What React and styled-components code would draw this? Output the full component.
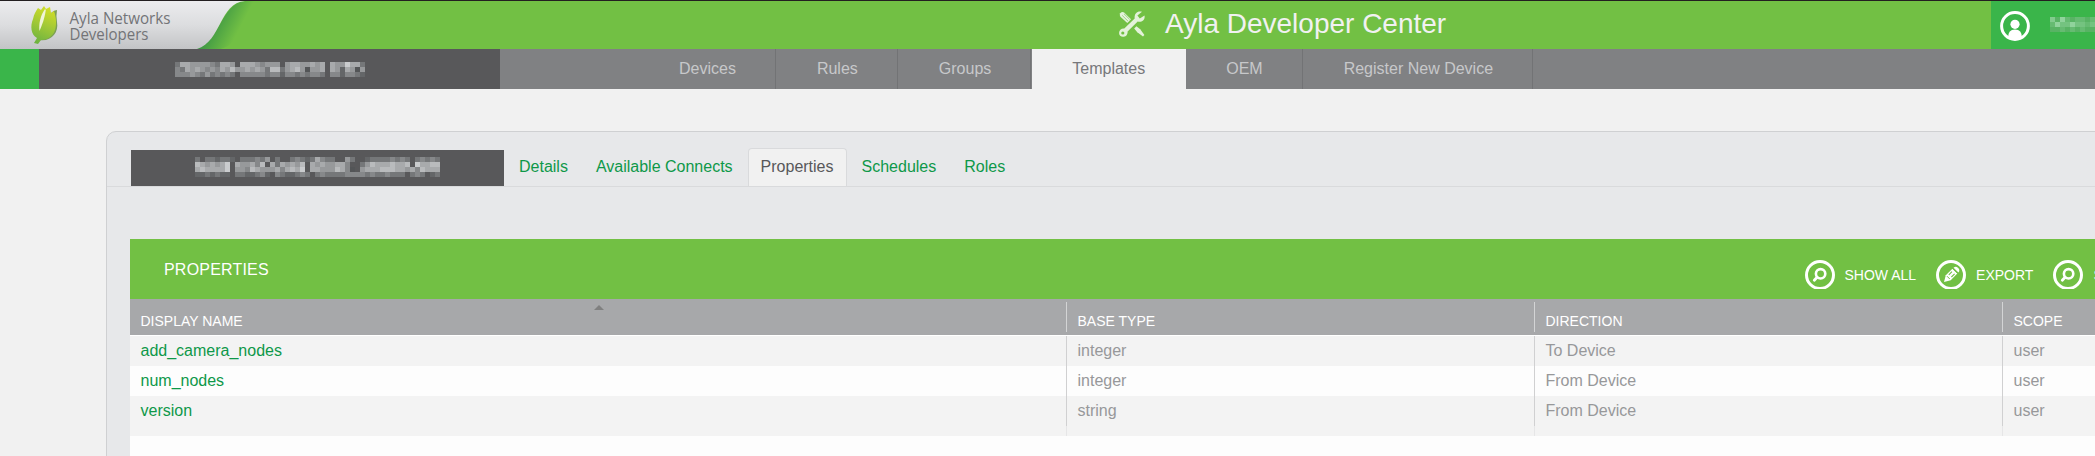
import React from 'react';
import styled, { createGlobalStyle, css } from 'styled-components';

const GlobalStyle = createGlobalStyle`
  * { box-sizing: border-box; }
  body {
    margin: 0;
    overflow: hidden;
    background: #f1f1f1;
    font-family: "Liberation Sans", Arial, sans-serif;
    font-size: 16px;
  }
`;

const Page = styled.div`
  height: 456px;
  overflow: hidden;
  display: flex;
  flex-direction: column;
`;

const TopBar = styled.header`
  flex: none;
  display: flex;
  justify-content: space-between;
  height: 49px;
  border-top: 1px solid #231f20;
  background: #72c044;
`;

const Brand = styled.svg`
  display: block;
  flex: none;
  width: 270px;
  height: 48px;
`;

const TitleGroup = styled.div`
  display: flex;
  align-items: center;
  gap: 20px;
  height: 45px;
  margin-left: 849px;
`;

const Title = styled.h1`
  margin: 0;
  font-size: 28px;
  font-weight: 400;
  line-height: 44px;
  color: #f1f1f1;
  white-space: nowrap;
`;

const Account = styled.div`
  display: flex;
  align-items: flex-start;
  gap: 20px;
  width: 104px;
  padding: 10px 0 0 9px;
  margin-left: auto;
  background: #3ab54a;
  svg { display: block; flex: none; }
`;

const AccountName = styled.div`
  padding-top: 6px;
`;

const NavBar = styled.nav`
  flex: none;
  display: flex;
  height: 40px;
  background: #808183;
`;

const NavMarker = styled.div`
  width: 39px;
  background: #3ab54a;
`;

const Clock = styled.div`
  width: 461px;
  padding: 13px 0 0 136px;
  margin-right: 138px;
  background: #58585a;
`;

const NavItem = styled.a`
  padding: 0 39px 0 41px;
  border-right: 1px solid #727375;
  line-height: 40px;
  color: #c7c8ca;
  white-space: nowrap;
  ${({ $active }) => $active && css`
    margin: 0 -1px 0 1px;
    padding: 0 40px;
    border-color: #f1f1f1;
    background: #f1f1f1;
    color: #77787b;
  `}
`;

const Panel = styled.main`
  flex: none;
  width: 2100px;
  height: 400px;
  margin: 42px 0 0 106px;
  border: 1px solid #cfd0d2;
  border-radius: 10px;
  background: #e7e8ea;
`;

const TabBar = styled.div`
  display: flex;
  align-items: flex-end;
  height: 55px;
  padding-left: 24px;
  border-bottom: 1px solid #d9dadc;
`;

const TemplateName = styled.div`
  width: 373px;
  height: 36px;
  padding: 7px 0 0 64px;
  margin-right: 2px;
  background: #58585a;
`;

const Tab = styled.a`
  height: 38px;
  margin-right: 2px;
  padding: 0 12px;
  border: 1px solid transparent;
  border-bottom: 0;
  border-radius: 4px 4px 0 0;
  line-height: 36px;
  color: #0e9849;
  white-space: nowrap;
  ${({ $active }) => $active && css`
    border-color: #d9dadc;
    background: #f1f1f1;
    color: #58585a;
  `}
`;

const TableCard = styled.section`
  margin: 52px 0 0 23px;
  height: 300px;
  background: #fdfdfd;
`;

const TableBar = styled.div`
  display: flex;
  height: 60px;
  padding-left: 34px;
  background: #72c044;
  color: #fff;
`;

const TableTitle = styled.h2`
  width: 1640.5px;
  margin: 0;
  font-size: 16px;
  font-weight: 400;
  letter-spacing: 0.2px;
  line-height: 62px;
`;

const Action = styled.a`
  display: flex;
  gap: 10px;
  flex: none;
  margin: 21px 20px 0 0;
  font-size: 14px;
  line-height: 30px;
  white-space: nowrap;
  svg { display: block; flex: none; }
`;

const columns = '936px 468px 468px 468px';

const HeadRow = styled.div`
  display: grid;
  grid-template-columns: ${columns};
  height: 37px;
  padding: 3px 0;
  border-bottom: 1px solid #fff;
  background: #a7a8aa;
`;

const HeadCell = styled.div`
  position: relative;
  padding: 4px 0 0 10.5px;
  font-size: 14px;
  line-height: 30px;
  height: 30px;
  color: #fff;
  & + & { border-left: 1px solid #d3d4d5; }
`;

const SortArrow = styled.span`
  position: absolute;
  left: 464px;
  top: 3px;
  border: 5px solid transparent;
  border-top: 0;
  border-bottom-color: #808080;
`;

const Row = styled.div`
  display: grid;
  grid-template-columns: ${columns};
  height: 30px;
  background: ${({ $shaded }) => ($shaded ? '#f3f3f3' : '#fdfdfd')};
`;

const Cell = styled.div`
  padding-left: 10.5px;
  line-height: 30px;
  color: ${({ $link }) => ($link ? '#0e9849' : '#97989a')};
  & + & { border-left: 1px solid #d0d0d1; }
`;

const FootRow = styled(Row)`
  height: 10px;
  background: #f3f3f3;
`;

const FootCell = styled.div`
  & + & { border-left: 1px solid #e6e6e7; }
`;

const MosaicSvg = styled.svg`
  display: block;
`;

/* Masked text: each hex digit is the brightness of one 5px block, "." is empty. */
function Mosaic({ rows, color = (n) => `rgb(${n * 17 - 2},${n * 17},${n * 17 + 2})` }) {
  const width = rows[0].length * 5;
  const height = rows.length * 5;
  return (
    <MosaicSvg width={width} height={height} shapeRendering="crispEdges">
      {rows.flatMap((row, y) =>
        [...row].map((c, x) =>
          c === '.' ? null : (
            <rect key={`${x}-${y}`} x={x * 5} y={y * 5} width="5" height="5" fill={color(parseInt(c, 16))} />
          )
        )
      )}
    </MosaicSvg>
  );
}

const clockBlocks = [
  '7aa999987aa9.aaa98999.9aa99a9a.a99caa7',
  '87a9a9898a9b99a9a97bb79ab9599a.a96a959',
  '888987978787.88888788688787887.8868876',
];

const nameBlocks = [
  '7.776776.777879.7..78767a877..97..677778787.78787',
  'ba9a9ac.a99a8b.a7a9a9b.a9a99aa8..79baaabaab.caabb',
  'abaaaac.998ba999a8abac.aa999ba85.9aaabbbaa9a8baaa',
  '6676766.7766786.8766787.787777888878778777.787.67',
];

const userBlocks = ['a7b878878', '8b99b9989', '778787877'];
const userColor = (n) => `rgb(${n * 14 - 10},${n * 8 + 123},${n * 14 + 2})`;

function BrandLogo() {
  return (
    <Brand viewBox="0 1 270 48">
      <defs>
        <linearGradient id="silver" x1="0" y1="0" x2="0" y2="1">
          <stop offset="0" stopColor="#ececee" />
          <stop offset=".5" stopColor="#dcdddf" />
          <stop offset="1" stopColor="#c3c4c6" />
        </linearGradient>
        <linearGradient id="shade" gradientUnits="userSpaceOnUse" x1="216" y1="18" x2="239" y2="30">
          <stop offset="0" stopColor="#3f9844" />
          <stop offset="1" stopColor="#72c044" />
        </linearGradient>
        <linearGradient id="leaf" x1=".7" y1="0" x2=".4" y2="1">
          <stop offset="0" stopColor="#d4df26" />
          <stop offset=".5" stopColor="#a3c936" />
          <stop offset="1" stopColor="#6fb43f" />
        </linearGradient>
      </defs>
      <path d="M190 49 C222 44 220 3 245 1 L270 1 C244 6 246 42 221 49Z" fill="url(#shade)" />
      <path d="M0 1H245C219 3 222 41 197 49H0Z" fill="url(#silver)" />
      <path d="M51 13Q54 10 57 10Q56 15 57 22C59 33 51 42 39 40Z" fill="#7c9f55" />
      <path d="M38 8L41 10L44 6L46 9L50 7L51 13L54 11C56 17 57 24 55 30C53 37 46 40 41 40L38 44L34 43L37 38C31 35 30 26 33 19C34 14 36 11 38 8Z" fill="url(#leaf)" />
      <path d="M45 9C40.5 15 38.5 24 39.5 31C42 25 44.5 19 45.8 10Z" fill="#f0f4d8" />
      <g fontFamily="'Open Sans', 'Noto Sans', sans-serif" fontSize="16" fill="#737477">
        <text x="69.5" y="23.5" textLength="101" lengthAdjust="spacingAndGlyphs">Ayla Networks</text>
        <text x="69.5" y="39.5" textLength="79" lengthAdjust="spacingAndGlyphs">Developers</text>
      </g>
    </Brand>
  );
}

function ToolsIcon() {
  return (
    <svg width="26" height="26" viewBox="0 0 26 26">
      <g fill="#e4f2da">
        <path d="M1.2 2.2Q3.4 0 5.4 1.8L12 8.3L8.3 12L1.4 5.8Q.2 4 1.2 2.2Z" />
        <path d="M15.2 17.4L17.4 15.2L21.2 18.3L25.4 24L24 25.4L18.3 21.2Z" />
        <path d="M23 .8L18.4 4.4L20.8 7.4L25.5 4.4C26.4 9.2 22.6 11.7 18.7 10.6L8.6 20.5C8.9 25.2 4 27.3 1.1 24.8C-1.4 21.5.9 17.2 5.3 17.5L15.7 7.5C15 3.1 18.2-.8 23 .8Z" />
      </g>
      <circle cx="3.8" cy="22" r="1.6" fill="#72c044" />
      <path d="M3.2 4.4L9 10.1M5 2.8L10.7 8.4" stroke="#72c044" strokeWidth=".6" />
    </svg>
  );
}

function UserIcon() {
  return (
    <svg width="30" height="30" viewBox="0 0 30 30">
      <circle cx="15" cy="15" r="13.4" fill="none" stroke="#fff" strokeWidth="3" />
      <circle cx="15" cy="13.3" r="4.6" fill="#fff" />
      <path d="M8 27Q8 18.6 15 18.6T22 27Q15 30 8 27Z" fill="#fff" />
    </svg>
  );
}

/* The ring is one pixel taller than its box, so its lower edge is flat. */
function RingIcon({ kind }) {
  return (
    <svg width="30" height="29" viewBox="0 0 30 29">
      <circle cx="15" cy="15" r="13.5" fill="none" stroke="#fff" strokeWidth="3" />
      {kind === 'search' ? (
        <g fill="none" stroke="#fff">
          <circle cx="15.6" cy="13.8" r="4.7" strokeWidth="2.6" />
          <path d="M12.1 17.2L9.3 20.2" strokeWidth="2.8" strokeLinecap="round" />
        </g>
      ) : (
        <g fill="#fff">
          <path d="M8 22L9.8 15.3L16.4 8.7L21.3 13.6L14.7 20.2Z" />
          <path d="M17.5 7.7Q19.8 5.7 22.1 7.9T22.4 12.5Z" />
          <path d="M12.8 14.8L16 11.6M15.4 17L18.6 13.8" stroke="#72c044" strokeWidth="1.1" />
          <path d="M16.6 8.3L21.7 13.4" stroke="#72c044" strokeWidth="1" />
          <path d="M11 16.2L13.8 19" stroke="#72c044" strokeWidth="1" />
        </g>
      )}
    </svg>
  );
}

const navItems = ['Devices', 'Rules', 'Groups', 'Templates', 'OEM', 'Register New Device'];
const tabs = ['Details', 'Available Connects', 'Properties', 'Schedules', 'Roles'];
const headings = ['DISPLAY NAME', 'BASE TYPE', 'DIRECTION', 'SCOPE'];
const properties = [
  ['add_camera_nodes', 'integer', 'To Device', 'user'],
  ['num_nodes', 'integer', 'From Device', 'user'],
  ['version', 'string', 'From Device', 'user'],
];

export default function App() {
  return (
    <Page>
      <GlobalStyle />
      <TopBar>
        <BrandLogo />
        <TitleGroup>
          <ToolsIcon />
          <Title>Ayla Developer Center</Title>
        </TitleGroup>
        <Account>
          <UserIcon />
          <AccountName>
            <Mosaic rows={userBlocks} color={userColor} />
          </AccountName>
        </Account>
      </TopBar>
      <NavBar>
        <NavMarker />
        <Clock>
          <Mosaic rows={clockBlocks} />
        </Clock>
        {navItems.map((item) => (
          <NavItem key={item} $active={item === 'Templates'}>{item}</NavItem>
        ))}
      </NavBar>
      <Panel>
        <TabBar>
          <TemplateName>
            <Mosaic rows={nameBlocks} />
          </TemplateName>
          {tabs.map((tab) => (
            <Tab key={tab} $active={tab === 'Properties'}>{tab}</Tab>
          ))}
        </TabBar>
        <TableCard>
          <TableBar>
            <TableTitle>PROPERTIES</TableTitle>
            <Action><RingIcon kind="search" />SHOW ALL</Action>
            <Action><RingIcon kind="edit" />EXPORT</Action>
            <Action><RingIcon kind="search" />SEARCH</Action>
          </TableBar>
          <HeadRow>
            {headings.map((heading, i) => (
              <HeadCell key={heading}>
                {heading}
                {i === 0 && <SortArrow />}
              </HeadCell>
            ))}
          </HeadRow>
          {properties.map((values, r) => (
            <Row key={values[0]} $shaded={r % 2 === 0}>
              {values.map((value, i) => (
                <Cell key={headings[i]} $link={i === 0}>{value}</Cell>
              ))}
            </Row>
          ))}
          <FootRow>
            {headings.map((heading) => <FootCell key={heading} />)}
          </FootRow>
        </TableCard>
      </Panel>
    </Page>
  );
}
